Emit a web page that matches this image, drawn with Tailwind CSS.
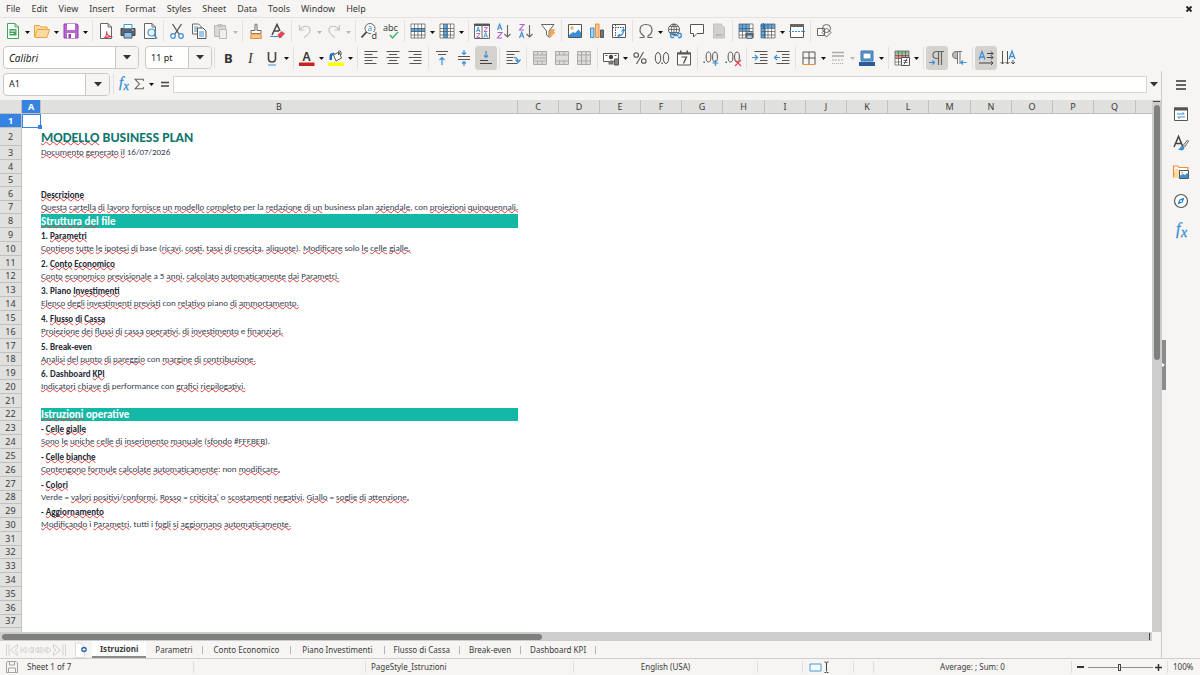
<!DOCTYPE html>
<html lang="it">
<head>
    <meta charset="UTF-8">
    <meta name="viewport" content="width=device-width, initial-scale=1.0">
    <title>Modello Business Plan</title>
    <script src="https://cdn.jsdelivr.net/npm/@tailwindcss/browser@4"></script>
</head>
<body class="h-screen flex flex-col overflow-hidden bg-[#f6f5f4] text-[#3a3a3a] text-[9px] leading-[12px] font-['Noto_Sans','Open_Sans',sans-serif]">

    <!-- Menu bar -->
    <header class="h-[17px] shrink-0 flex items-center justify-between pl-[6px] pr-[7px]">
        <nav id="menu" class="flex gap-[11px]"></nav>
        <button aria-label="Close document" class="size-[8px]">
            <svg viewBox="0 0 8 8" class="size-[8px]" fill="none" stroke="#222" stroke-width="1.8"><path d="M1.5 1.5l5 5M6.5 1.5l-5 5"/></svg>
        </button>
    </header>

    <!-- Standard toolbar -->
    <div id="standard" class="h-[27px] shrink-0 flex items-center border-t border-[#e4e3e1] pl-[2px] mr-[16px]"></div>

    <!-- Formatting toolbar -->
    <div class="h-[27px] shrink-0 flex items-center pl-[3px]">
        <div class="grid w-[136px] h-[23px] mr-[6px] rounded-[4px] border border-[#cdc7c2] bg-white overflow-hidden">
            <select aria-label="Font name" class="col-start-1 row-start-1 appearance-none pl-[5px] italic text-[10px] text-[#222]"><option>Calibri</option></select>
            <span class="col-start-1 row-start-1 justify-self-end pointer-events-none w-[23px] bg-[#f6f5f4] border-l border-[#cdc7c2] flex items-center justify-center"><svg viewBox="0 0 8 5" class="w-[8px] h-[5px]"><path d="M0 0h8L4 4.5z" fill="#2e3436"/></svg></span>
        </div>
        <div class="grid w-[67px] h-[23px] rounded-[4px] border border-[#cdc7c2] bg-white overflow-hidden">
            <select aria-label="Font size" class="col-start-1 row-start-1 appearance-none pl-[5px] text-[9px] text-[#222]"><option>11 pt</option></select>
            <span class="col-start-1 row-start-1 justify-self-end pointer-events-none w-[23px] bg-[#f6f5f4] border-l border-[#cdc7c2] flex items-center justify-center"><svg viewBox="0 0 8 5" class="w-[8px] h-[5px]"><path d="M0 0h8L4 4.5z" fill="#2e3436"/></svg></span>
        </div>
        <div id="formatting" class="flex items-center"></div>
    </div>

    <div class="flex-1 min-h-0 flex">
        <main class="flex-1 min-w-0 flex flex-col">
            <!-- Formula bar -->
            <div class="h-[29px] shrink-0 flex items-center pb-[3px] pl-[3px]">
                <div class="grid w-[107px] h-[23px] rounded-[4px] border border-[#cdc7c2] bg-white overflow-hidden">
                    <input aria-label="Name box" value="A1" class="col-start-1 row-start-1 w-full pl-[5px] text-[#222]">
                    <button aria-label="Named ranges" class="col-start-1 row-start-1 justify-self-end w-[24px] bg-[#f6f5f4] border-l border-[#cdc7c2] flex items-center justify-center"><svg viewBox="0 0 8 5" class="w-[8px] h-[5px]"><path d="M0 0h8L4 4.5z" fill="#2e3436"/></svg></button>
                </div>
                <div id="formula" class="flex items-center pl-[3px]"></div>
                <input aria-label="Formula" class="flex-1 h-[17px] bg-white border border-[#d5d3d0]">
                <button aria-label="Expand formula bar" class="w-[14px] flex justify-center"><svg viewBox="0 0 8 5" class="w-[8px] h-[5px]"><path d="M0 0h8L4 4.5z" fill="#2e3436"/></svg></button>
            </div>

            <!-- Cell grid -->
            <div class="flex-1 min-h-0 flex">
                <div class="flex-1 min-w-0 overflow-hidden bg-white">
                    <table class="w-full table-fixed border-separate border-spacing-0">
                        <colgroup id="cols"></colgroup>
                        <thead><tr id="letters" class="h-[14px] bg-[#e0e0de]"></tr></thead>
                        <tbody id="cells"></tbody>
                    </table>
                </div>
                <div class="w-[9px] shrink-0 bg-[#cdcdcd] flex flex-col items-center">
                    <div class="w-[7px] h-px mt-[1px] bg-[#444]"></div>
                    <div class="w-[6px] h-[48%] mt-[3px] rounded-full bg-[#7f817f]"></div>
                </div>
            </div>
            <div class="h-[9px] shrink-0 flex mr-[9px] bg-[#cdcdcd] items-center justify-between px-[2px]">
                <div class="w-[47%] h-[6px] rounded-full bg-[#7f817f]"></div>
                <div class="w-px h-[7px] bg-[#444]"></div>
            </div>

            <!-- Sheet tabs -->
            <div class="h-[17px] shrink-0 flex text-[8px]">
                <div class="w-[68px] flex items-center pl-[5px]">
                    <svg viewBox="0 0 62 14" class="w-[62px] h-[14px]" fill="none" stroke="#d3d2d0" stroke-width="1">
                        <path d="M1.500 1v12M4 1.500v11M12.500 1.500l-7 5.500 7 5.500v-3.500l-2.500-2 2.500-2z"/>
                        <path d="M16 4v6M21 4l-4 3 4 3zM27 4l-4 3 4 3zM28.500 4v6M33 4l-3 3 3 3z"/>
                        <path d="M34 4v6M36 4l4 3-4 3zM41 4v6M42 4l4 3-4 3z"/>
                        <path d="M48.500 1.500l7 5.500-7 5.500v-3.500l2.500-2-2.500-2zM58 1.500v11M60.500 1v12"/>
                    </svg>
                </div>
                <button aria-label="Add sheet" class="w-[24px] flex items-center justify-center">
                    <svg viewBox="0 0 14 16" class="w-[14px] h-[16px]"><path d="M2.500 1v14.500h9V5l-4-4z" fill="#fff" stroke="#dcdbd9"/><circle cx="11" cy="7.500" r="2.800" fill="#3465a4"/><path d="M11 6v3M9.500 7.500h3" stroke="#fff"/></svg>
                </button>
                <div id="tabs" class="flex" role="tablist"></div>
            </div>
        </main>

        <!-- Sidebar -->
        <div class="w-[4px] shrink-0 flex items-center border-l border-[#cbcac8]">
            <button aria-label="Hide sidebar" class="w-[4px] h-[50px] bg-[#8b8b8b] flex items-center"><svg viewBox="0 0 4 6" class="w-[4px] h-[6px]"><path d="M0 1l3 2-3 2z" fill="#fff"/></svg></button>
        </div>
        <aside id="sidebar" class="w-[35px] shrink-0 flex flex-col items-center pt-[3px] pr-[3px] gap-[7px]"></aside>
    </div>

    <!-- Status bar -->
    <footer class="h-[17px] shrink-0 flex items-center border-t border-[#cfcecc] text-[8px]">
        <div class="w-[23px] flex justify-center">
            <svg viewBox="0 0 12 12" class="size-[12px]" fill="none" stroke="#a3a3a1"><path d="M1 .500h9l1.500 1.500v9.500H.500V1zM3.500.500v3.500h5V.500M2.500 11V7h7v4"/></svg>
        </div>
        <div class="w-[171px] pl-[4px] border-r border-[#e0dfdd]">Sheet 1 of 7</div>
        <div class="w-[172px] h-[12px] border-r border-[#e0dfdd]"></div>
        <div class="w-[208px] pl-[5px] border-r border-[#e0dfdd]">PageStyle_Istruzioni</div>
        <div class="flex-1 text-center border-r border-[#e0dfdd]">English (USA)</div>
        <div class="w-[45px] h-[12px] border-r border-[#e0dfdd]"></div>
        <div class="w-[51px] h-[12px] border-r border-[#e0dfdd] flex items-center pl-[6px]">
            <svg viewBox="0 0 20 12" class="w-[20px] h-[12px]" fill="none"><path d="M1 3h11v7H1z" fill="#f3f9fd" stroke="#4a9bd6" stroke-width="1"/><path d="M15.500 1h1.500l.5.500.5-.500h1.500M17.500 1.500v9M15.500 11.500h1.500l.5-.500.5.500h1.500" stroke="#444"/></svg>
        </div>
        <div class="w-[20px] h-[12px] border-r border-[#e0dfdd]"></div>
        <div class="w-[198px] text-center border-r border-[#e0dfdd]">Average: ; Sum: 0</div>
        <div class="w-[96px] h-[12px] border-r border-[#e0dfdd] flex items-center justify-between px-[5px]">
            <button aria-label="Zoom out" class="w-[8px] h-[12px] flex items-center"><span class="w-[7px] h-[2px] bg-[#2e3436]"></span></button>
            <input type="range" aria-label="Zoom" min="0" max="100" value="49" class="appearance-none w-[65px] h-px bg-[#8e8e8c] [&::-webkit-slider-thumb]:appearance-none [&::-webkit-slider-thumb]:w-[3px] [&::-webkit-slider-thumb]:h-[7px] [&::-webkit-slider-thumb]:bg-[#f6f5f4] [&::-webkit-slider-thumb]:border [&::-webkit-slider-thumb]:border-[#444]">
            <button aria-label="Zoom in" class="size-[7px]"><svg viewBox="0 0 7 7" class="size-[7px]"><path d="M3.500 0v7M0 3.500h7" stroke="#2e3436" stroke-width="1.500"/></svg></button>
        </div>
        <div class="w-[32px] pl-[5px]">100%</div>
    </footer>

    <script>
        // Icons on a 16x16 grid
        const doc = '<path d="M2.500.500h7.500l3.500 3.500v11.500h-11z" fill="#fff" stroke="#666"/><path d="M10 .500v3.500h3.500" fill="none" stroke="#666"/>';
        const cellGrid = '<path d="M1 1h14v14H1z" fill="#fff"/>';
        const gridLines = '<path d="M1 1h14v14H1zM1 5.500h14M1 8.500h14M1 12h14M4.500 1v14M8 1v14M11.500 1v14" fill="none" stroke="#555" stroke-width=".7"/>';
        const calendar = '<path d="M1.500 3h13v12h-13z" fill="#fafafa" stroke="#555"/><path d="M1 2.500h14v2H1zM4 .500h1.500v3H4zM10.500.500h1.500v3h-1.500z" fill="#555"/>';
        const mergeBase = '<path d="M1.500 1.500h13v13h-13z" fill="#dcdcda" stroke="#aaa9a7"/>';
        const txt = (x, y, size, fill, s) => `<text x="${x}" y="${y}" font-size="${size}" fill="${fill}">${s}</text>`;
        const icons = {
            'New': '<path d="M2.500.500h7.500l3.500 3.500v11.500h-11z" fill="#fff" stroke="#43a35c"/><path d="M10 .500v3.500h3.500" fill="none" stroke="#43a35c"/><path d="M4.500 6h7v6.500h-7z" fill="#43a35c"/><path d="M5.500 8h5M5.500 10.500h3" stroke="#fff"/>',
            'Open': '<path d="M.500 14V2.500h5l1.500 1.500h6v3M.500 14L3.500 6.500h12l-2.500 8H1z" fill="#fddba0" stroke="#e8a33d" stroke-linejoin="round"/>',
            'Save': '<path d="M1 1h13l1 1v13H1z" fill="#b868cf" stroke="#9440ab"/><path d="M4 1h8v6H4z" fill="#fff"/><path d="M4 10h8v5H4z" fill="#fff"/><path d="M5.500 11h2.500v4H5.500z" fill="#9440ab"/>',
            'Export as PDF': doc + '<path d="M6 15.500c2-2 3-5 2.500-7 0 3 2.500 5.500 6 5.500-3-1-6 0-8.500 1.500z" fill="none" stroke="#dc3b4a" stroke-width="1.100"/>',
            'Print': '<path d="M1 5.500h14v7H1z" fill="#5c6467" stroke="#444"/><path d="M4 1.500h8v4H4z" fill="#fff" stroke="#4a93cf"/><path d="M4 9.500h8v5.500H4z" fill="#8bc3ee" stroke="#4a5560"/><path d="M12 7h1.500" stroke="#fff"/>',
            'Print preview': doc + '<circle cx="9.500" cy="9.500" r="3.500" fill="#e6f3fd" stroke="#4a93cf" stroke-width="1.200"/><path d="M12 12l3 3.500" stroke="#4a93cf" stroke-width="1.500"/>',
            'Cut': '<path d="M3.500 1l6.500 10M12.500 1L6 11" fill="none" stroke="#555" stroke-width="1.300"/><circle cx="4" cy="13" r="2.300" fill="none" stroke="#3b8fd4" stroke-width="1.200"/><circle cx="12" cy="13" r="2.300" fill="none" stroke="#3b8fd4" stroke-width="1.200"/>',
            'Copy': '<path d="M1.500 1h6l2.500 2.500V11h-8.500z" fill="#fff" stroke="#666"/><path d="M3 4h4M3 6h5M3 8h4" stroke="#4a93cf"/><path d="M6.500 5h5.500l3 3v7.500H6.500z" fill="#fff" stroke="#555"/><path d="M8 9h5M8 11h5M8 13h5" stroke="#3b8fd4"/>',
            'Paste': '<path d="M1.500 2.500h11v11h-11z" fill="#d9d8d6" stroke="#b9b8b6"/><path d="M4.500 1h5v3h-5z" fill="#c3c2c0"/><path d="M6.500 6.500h7v9h-7z" fill="#f0efee" stroke="#b9b8b6"/>',
            'Clone formatting': '<path d="M7 1.500q1-1 2 0v6h4v3H3v-3h4z" fill="#fff" stroke="#666"/><path d="M3 11h10l.500 4.500h-11z" fill="#fbc78c" stroke="#e8913a"/>',
            'Clear formatting': '<path d="M2 12L7 1.500 10 8M4 8h5" fill="none" stroke="#444" stroke-width="1.500"/><path d="M0 13.500h8" stroke="#3b8fd4"/><path d="M7.500 12l4-4 3.500 2.500-4 4.500h-2z" fill="#e04a58"/>',
            'Undo': '<path d="M2.500 2v5h5M3 6.500C6 2 12 2.500 13 6c1 3.500-2 6-6 8.500" fill="none" stroke="#c4c3c1" stroke-width="1.200"/>',
            'Redo': '<path d="M13.500 2v5h-5M13 6.500C10 2 4 2.500 3 6c-1 3.500 2 6 6 8.500" fill="none" stroke="#c4c3c1" stroke-width="1.200"/>',
            'Find and replace': '<circle cx="9" cy="5.500" r="5" fill="#fff" stroke="#666"/><path d="M5.500 9L.500 14.500" stroke="#444" stroke-width="1.800"/>' + txt(6.500, 8, 8, '#3b8fd4', 'a') + '<path d="M10 9h6v7h-6z" fill="#f6f5f4"/>' + txt(10.500, 15.500, 9, '#444', 'd'),
            'Spelling': txt(0, 8, 9, '#444', 'abc') + '<path d="M7 12l2.500 3 5.500-6" fill="none" stroke="#3fae6a" stroke-width="1.400"/>',
            'Row': cellGrid + '<path d="M1 5h14v4H1z" fill="#5aaae8"/>' + gridLines,
            'Column': cellGrid + '<path d="M4.500 1H9v14H4.500z" fill="#5aaae8"/>' + gridLines,
            'Sort': '<path d="M.500 1h15v14.500H.500z" fill="#fff" stroke="#666"/><path d="M0 1h16v2H0z" fill="#555"/><path d="M8 2v14" stroke="#666"/><path d="M2.500 9l1.700-5 1.700 5M3 7.500h2.500M9.800 14.500l1.900-5 1.900 5M10.500 13h2.500" fill="none" stroke="#3b8fd4" stroke-width=".9"/><path d="M2.500 10.500h3.500l-3.500 4h3.500M10 4.500h3.500L10 8.500h3.500" fill="none" stroke="#b05fc8" stroke-width=".9"/>',
            'Sort ascending': '<path d="M1.500 7l2.200-6 2.200 6M2.200 5h3" fill="none" stroke="#3b8fd4" stroke-width="1.100"/><path d="M1.500 9.500h4.500l-4.500 5.500h4.500" fill="none" stroke="#b05fc8" stroke-width="1.100"/><path d="M11.500 2v12M8.500 11l3 3 3-3" fill="none" stroke="#666" stroke-width="1.100"/>',
            'Sort descending': '<path d="M1.500 1.500h4.500l-4.500 5.500h4.500" fill="none" stroke="#b05fc8" stroke-width="1.100"/><path d="M1.500 15l2.200-6 2.200 6M2.200 13h3" fill="none" stroke="#3b8fd4" stroke-width="1.100"/><path d="M11.500 2v12M8.500 11l3 3 3-3" fill="none" stroke="#666" stroke-width="1.100"/>',
            'AutoFilter': '<path d="M1.500 1.500h12.500L9 8v6l-2.500-2V8z" fill="#fff" stroke="#666" stroke-linejoin="round"/><path d="M11 6.500h3.500l-1.500 3h2L9.500 15l1-4H9z" fill="#f6a95a" stroke="#e8913a" stroke-width=".6"/>',
            'Image': '<path d="M1.500 1.500h13v13h-13z" fill="#fff" stroke="#555"/><circle cx="5" cy="5" r="1.700" fill="#f6b25a"/><path d="M2 14V12l4-3 2 1 3.500-3.500L14 9.500V14z" fill="#3b8fd4"/>',
            'Chart': '<path d="M1.500 5h3.500v9.500H1.500z" fill="#a8d2f3" stroke="#3b8fd4"/><path d="M6.500 1h3.500v13.500H6.500z" fill="#fbc78c" stroke="#e8913a"/><path d="M11.500 7h3v7.500h-3z" fill="#777" stroke="#555"/>',
            'Pivot table': '<path d="M1.500 1.500h13v13h-13z" fill="#fff" stroke="#555"/><path d="M1.500 4.500h13M4.500 1.500v13" stroke="#555" stroke-dasharray="1.500 1"/><path d="M7 13c4 0 5.500-2 5.500-6M10.500 8.500l2-2.500 2 2.500M9 11l-2 2 2 2" fill="none" stroke="#3b8fd4" stroke-width="1.200"/>',
            'Special character': '<path d="M1.500 14.500h4.500v-1.500C3.500 11.500 2 9.500 2 7c0-3.500 2.500-5.500 6-5.500S14 3.500 14 7c0 2.500-1.500 4.500-4 6v1.500h4.500" fill="none" stroke="#666" stroke-width="1.200"/>',
            'Hyperlink': '<circle cx="7" cy="6.500" r="5.500" fill="#fff" stroke="#555"/><path d="M1.500 6.500h11M7 1v11M2.500 3.500h9M2.500 9.500h9M7 1C3.500 4 3.500 9 7 12M7 1c3.500 3 3.500 8 0 11" fill="none" stroke="#555" stroke-width=".8"/><path d="M7 10.500H4.500q-2 2 0 4H7M11 10.500h2.500q2 2 0 4H11M6.500 12.500h5" fill="none" stroke="#3b8fd4" stroke-width="1.300"/>',
            'Comment': '<path d="M1.500 1.500h13v9H8L4.500 14v-3.500h-3z" fill="#fff" stroke="#555"/>',
            'Headers and footers': '<path d="M2.500 1h7.500l3.500 3.500v10.500h-11z" fill="#d2d1cf" stroke="#c3c2c0"/><path d="M4.500 11h7v2h-7z" fill="#b9b8b6"/>',
            'Print range': cellGrid + '<path d="M1 1h10v7H1z" fill="#5aaae8"/>' + gridLines + '<path d="M7.500 10h8v4.500h-8z" fill="#5c6467"/><path d="M9 8.500h5v2H9zM9 12h5v3.500H9z" fill="#a8d2f3" stroke="#555" stroke-width=".7"/>',
            'Freeze': cellGrid + '<path d="M1 1h14v4H1zM1 1h5v14H1z" fill="#5aaae8"/>' + gridLines + '<path d="M3.500 0v6M.500 3h6" stroke="#1d70b8"/>',
            'Split': '<path d="M1.500 1.500h13v13h-13z" fill="#fff" stroke="#555"/><path d="M1 1h14v3H1z" fill="#666"/><path d="M0 8.500h16" stroke="#3b8fd4" stroke-dasharray="2 1"/>',
            'Draw functions': '<path d="M1.500 5.500h7v7h-7z" fill="#fff" stroke="#666"/><circle cx="10.500" cy="5.500" r="4" fill="none" stroke="#666"/><path d="M10.500 5l4.500 4.500-4.500 4.500L6 9.500z" fill="none" stroke="#666"/>',
            'Bold': '<text x="4" y="13" font-size="13" font-weight="700" fill="#333">B</text>',
            'Italic': '<text x="6" y="13" font-size="14" font-style="italic" font-family="Liberation Serif" fill="#333">I</text>',
            'Underline': '<path d="M4.500 2v6.500q0 3.500 3.500 3.500t3.500-3.500V2" fill="none" stroke="#444" stroke-width="1.600"/><path d="M4 15h8" stroke="#3b8fd4"/>',
            'Font color': '<text x="3.500" y="11" font-size="12" font-weight="600" fill="#333">A</text><path d="M0 12.500h15.500v3.500H0z" fill="#c9211e"/>',
            'Background color': '<path d="M5.500 5l5.500-3 2.500 6-5.500 3z" fill="#fff" stroke="#555"/><path d="M10.500 5V1.500q1.500-2 2.500.500v3" fill="none" stroke="#555"/><path d="M1.500 10V5.500Q2.500 2 7 3L4 6v4z" fill="#1d70b8"/><path d="M0 12.500h16v3.500H0z" fill="#ff0"/>',
            'Align left': '<path d="M1.500 1.500h13M1.500 4.500h8M1.500 7.500h13M1.500 10.500h8M1.500 13.500h12" stroke="#555"/>',
            'Align center': '<path d="M1.500 1.500h13M4 4.500h8M1.500 7.500h13M4 10.500h8M2.500 13.500h11" stroke="#555"/>',
            'Align right': '<path d="M1.500 1.500h13M6.500 4.500h8M1.500 7.500h13M6.500 10.500h8M2.500 13.500h12" stroke="#555"/>',
            'Align top': '<path d="M2 1.500h12M4 4.500h8" stroke="#555"/><path d="M8 15V8M5.500 10l2.500-2.500 2.500 2.500" fill="none" stroke="#3b8fd4" stroke-width="1.200"/>',
            'Center vertically': '<path d="M2 6.500h12M2 9.500h12" stroke="#555"/><path d="M8 0v4.500M6 2.500l2 2 2-2M8 16v-5M6 13.500l2-2 2 2" fill="none" stroke="#3b8fd4" stroke-width="1.200"/>',
            'Align bottom': '<path d="M2 13.500h12M2 10.500h8" stroke="#444"/><path d="M8 1v6M6 5.500l2 2 2-2" fill="none" stroke="#3b8fd4" stroke-width="1.200"/>',
            'Wrap text': '<path d="M1.500 1.500h13M1.500 4.500h8M1.500 7.500h7M1.500 10.500h6M1.500 13.500h11" stroke="#555"/><path d="M9 7.500q4 0 4 4M10.500 9.500l2.500 3 2.500-3" fill="none" stroke="#3b8fd4" stroke-width="1.200"/>',
            'Merge and center': mergeBase + '<path d="M1.500 5h13M1.500 11h13M5.500 1.500V5M10 1.500V5M5.500 11v3.500M10 11v3.500M1.500 8h13" stroke="#aaa9a7"/>',
            'Merge cells': mergeBase + '<path d="M1.500 5h13M1.500 11h13M5.500 1.500V5M10 1.500V5M5.500 11v3.500M10 11v3.500" stroke="#aaa9a7"/>',
            'Unmerge cells': mergeBase + '<path d="M1.500 5h13M1.500 11h13M5.500 1.500v13M10 1.500v13" stroke="#aaa9a7"/>',
            'Currency': '<path d="M.500 3.500h15v8H.500z" fill="#fff" stroke="#555"/><circle cx="8" cy="7" r="2.200" fill="#444"/><path d="M2.500 5.500h2M11.500 5.500h2" stroke="#555"/><path d="M5.500 12q2-3 5-1v3.500h-5z" fill="#777"/><path d="M11.500 9h4v6h-4z" fill="#888" stroke="#555"/>',
            'Percent': '<circle cx="4.200" cy="5" r="2.300" fill="none" stroke="#555" stroke-width="1.100"/><circle cx="11.800" cy="11" r="2.300" fill="none" stroke="#555" stroke-width="1.100"/><path d="M11.500 2l-7 12" stroke="#555" stroke-width="1.100"/>',
            'Number': '<ellipse cx="4" cy="8" rx="2.700" ry="5.500" fill="none" stroke="#555"/><ellipse cx="12" cy="8" rx="2.700" ry="5.500" fill="none" stroke="#555"/><path d="M7.500 12.500h1.200v1.500H7.500z" fill="#444"/>',
            'Date': calendar + '<path d="M5.500 7h5l-3 6.500" fill="none" stroke="#444" stroke-width="1.200"/>',
            'Add decimal place': '<ellipse cx="5.500" cy="7" rx="2.400" ry="5" fill="none" stroke="#555"/><ellipse cx="12" cy="7" rx="2.400" ry="5" fill="none" stroke="#555"/><path d="M.500 11.500h1.300v1.500H.500z" fill="#444"/><path d="M12.500 10v6M9.500 13h6" stroke="#3b8fd4" stroke-width="1.200"/>',
            'Delete decimal place': '<ellipse cx="5.500" cy="7" rx="2.400" ry="5" fill="none" stroke="#555"/><ellipse cx="12" cy="7" rx="2.400" ry="5" fill="none" stroke="#555"/><path d="M.500 11.500h1.300v1.500H.500z" fill="#444"/><path d="M10 10l6 6M16 10l-6 6" stroke="#e04a58" stroke-width="1.200"/>',
            'Increase indent': '<path d="M2.500 1.500h13M8 4.500h7.500M8 7.500h7.500M8 10.500h7.500M2.500 13.500h13" stroke="#555"/><path d="M0 7.500h5.500M3 5l2.500 2.500L3 10" fill="none" stroke="#3b8fd4" stroke-width="1.200"/>',
            'Decrease indent': '<path d="M2.500 1.500h13M8 4.500h7.500M8 7.500h7.500M8 10.500h7.500M2.500 13.500h13" stroke="#555"/><path d="M6 7.500H.500M3 5L.500 7.500 3 10" fill="none" stroke="#3b8fd4" stroke-width="1.200"/>',
            'Borders': '<path d="M2 14V2h12v12M2 8h12M8 2v12" fill="none" stroke="#555"/><path d="M1.500 14.500h13" stroke="#e8913a"/>',
            'Border style': '<path d="M2 2.500h12M2 6h12" stroke="#aaa9a7" stroke-width="1.500"/><path d="M2 10h12" stroke="#aaa9a7" stroke-dasharray="2 1"/><path d="M2 13.500h12" stroke="#aaa9a7" stroke-dasharray="1 1"/>',
            'Border color': '<path d="M2 1h12v10H2z" fill="#5aaae8" stroke="#3b6ea5"/><path d="M4 3h8v6H4z" fill="#fff" stroke="#3b6ea5"/><path d="M0 12h16v4H0z" fill="#2a5c9a"/>',
            'Conditional formatting': cellGrid + '<path d="M1 1h14v3.500H1z" fill="#7fca95"/><path d="M1 4.500h14v4H1z" fill="#ee8a84"/>' + gridLines + '<path d="M7.500 7.500h8v8h-8z" fill="#fff" stroke="#555"/><path d="M9.500 10.500h4M9.500 12.500h4M13 8.500l-3 6" stroke="#555" stroke-width=".9"/>',
            'Left-to-right': '<path d="M9.500 15V1.500M12.500 1.500V15M15 1.500H7.500Q4 1.500 4 5t3.500 3.500h2" fill="none" stroke="#666" stroke-width="1.200"/><path d="M0 12.500h5.500M3.500 10.500l2 2-2 2" fill="none" stroke="#3b8fd4" stroke-width="1.200"/>',
            'Right-to-left': '<path d="M6.500 1.500v12.500M9 14V1.500" fill="none" stroke="#777"/><path d="M11 1.500H5Q1.500 1.500 1.500 5T5 8.500h1.500v-7" fill="#bbb" stroke="#777"/><path d="M15.500 12.500H10M12 10.500l-2 2 2 2" fill="none" stroke="#3b8fd4" stroke-width="1.200"/>',
            'Horizontal text': '<path d="M1 9.500l3-8 3 8M2 7h4" fill="none" stroke="#3b8fd4" stroke-width="1.300"/><path d="M9 3.500h6M13 1.500l2 2-2 2M9 7.500h6M13 5.500l2 2-2 2M1 13h14M13 11l2 2-2 2" fill="none" stroke="#444"/>',
            'Vertical text': '<path d="M9 9l3-8 3 8M10 6.500h4" fill="none" stroke="#3b8fd4" stroke-width="1.300"/><path d="M2.500 1v13M.500 12l2 2 2-2M7.500 1v13M5.500 12l2 2 2-2M13 10v4M11 12l2 2 2-2" fill="none" stroke="#555"/>',
            'Function wizard': '<text x="4" y="11" font-size="15" font-style="italic" font-family="Liberation Serif" fill="#3b8fd4" stroke="#3b8fd4" stroke-width=".3">f</text><text x="8.500" y="14" font-size="12" font-style="italic" font-family="Liberation Serif" fill="#3b8fd4" stroke="#3b8fd4" stroke-width=".3">x</text>',
            'Select function': '<path d="M13 4.500V2.500H3.500L8.500 8l-5 5.500H13v-2" fill="none" stroke="#666" stroke-width="1.200"/>',
            'Accept formula': '<path d="M4 6.500h8M4 10h8" stroke="#444" stroke-width="1.500"/>',
            'Sidebar settings': '<path d="M3 4h10M3 8h10M3 12h10" stroke="#333" stroke-width="1.500"/>',
            'Properties': '<path d="M1.500 2h13v12.500h-13z" fill="#fff" stroke="#555"/><path d="M1 1.500h14v3H1z" fill="#555"/><path d="M4 8h7M9.500 6.500L11.500 8M12 11H5M6.500 12.500L4.500 11" stroke="#3b8fd4"/>',
            'Styles': '<path d="M1 12L5.500 1.500 10 12M2.500 8.500h6" fill="none" stroke="#444" stroke-width="1.500"/><path d="M14.500 5l-4 5 1.500 1.500L15.500 6z" fill="#fff" stroke="#666"/><path d="M5 14.500q2-1 3-3l3.500.500q0 3-3 3.500z" fill="#3b8fd4"/>',
            'Gallery': '<path d="M.500 13.500V2h4.500l1 1.500h9v3M.500 13.500L3 6" fill="#fff" stroke="#e8913a" stroke-width="1.200"/><path d="M2 5h5v9H1z" fill="#fddba0"/><path d="M6.500 6.500h9v8h-9z" fill="#fff" stroke="#555"/><path d="M7 14v-2.500l3-1.500 2 1 2-2 1 1V14z" fill="#3b8fd4"/><circle cx="9" cy="8.500" r="1" fill="#f6b25a"/>',
            'Navigator': '<circle cx="8" cy="8" r="6.500" fill="#fff" stroke="#555" stroke-width="1.200"/><path d="M11.500 4.500L9.500 9.500l-5 2 2-5z" fill="#1d80d0"/><circle cx="8" cy="8" r="1" fill="#fff"/>',
            'Functions': '<text x="3" y="11.500" font-size="16" font-style="italic" font-family="Liberation Serif" fill="#3b8fd4" stroke="#3b8fd4" stroke-width=".3">f</text><text x="8" y="15" font-size="14" font-style="italic" font-family="Liberation Serif" fill="#3b8fd4" stroke="#3b8fd4" stroke-width=".3">x</text>'
        };

        const svg = name => `<svg viewBox="0 0 16 16" class="size-[16px] overflow-visible">${icons[name]}</svg>`;

        // 'v' = drop-down arrow, 'd' = disabled arrow, '|' = separator, '*' prefix = pressed
        function toolbar(id, items) {
            document.getElementById(id).innerHTML = items.map((item, i) => {
                if (item === '|') {
                    const afterArrow = items[i - 1] === 'v' || items[i - 1] === 'd';
                    return `<span class="${afterArrow ? 'w-[6px]' : 'w-[5px]'} h-[22px] flex justify-center"><span class="w-px bg-[#e2e1df]"></span></span>`;
                }
                if (item === 'v' || item === 'd') {
                    return `<button aria-label="More" class="w-[7px] h-[22px] flex items-center justify-center"><svg viewBox="0 0 5 3" class="w-[5px] h-[3px] mt-[2px]"><path d="M0 0h5L2.500 3z" fill="${item === 'v' ? '#111' : '#b9b8b6'}"/></svg></button>`;
                }
                const pressed = item.startsWith('*');
                const name = pressed ? item.slice(1) : item;
                return `<button aria-label="${name}" class="w-[22px] h-[24px] flex items-center justify-center rounded-[3px] ${pressed ? 'bg-[#d5d2ce]' : ''}">${svg(name)}</button>`;
            }).join('');
        }

        toolbar('standard', ['New', 'v', 'Open', 'v', 'Save', 'v', '|', 'Export as PDF', 'Print', 'Print preview', '|',
            'Cut', 'Copy', 'Paste', 'd', '|', 'Clone formatting', 'Clear formatting', '|', 'Undo', 'd', 'Redo', 'd', '|',
            'Find and replace', 'Spelling', '|', 'Row', 'v', 'Column', 'v', '|', 'Sort', 'Sort ascending', 'Sort descending', 'AutoFilter', '|',
            'Image', 'Chart', 'Pivot table', '|', 'Special character', 'v', 'Hyperlink', 'Comment', 'Headers and footers', '|',
            'Print range', 'Freeze', 'v', 'Split', '|', 'Draw functions']);
        toolbar('formatting', ['|', 'Bold', 'Italic', 'Underline', 'v', '|', 'Font color', 'v', 'Background color', 'v', '|',
            'Align left', 'Align center', 'Align right', '|', 'Align top', 'Center vertically', '*Align bottom', '|', 'Wrap text', '|',
            'Merge and center', 'Merge cells', 'Unmerge cells', '|', 'Currency', 'v', 'Percent', 'Number', 'Date', '|',
            'Add decimal place', 'Delete decimal place', '|', 'Increase indent', 'Decrease indent', '|',
            'Borders', 'v', 'Border style', 'd', 'Border color', 'v', '|', 'Conditional formatting', 'v', '|',
            '*Left-to-right', 'Right-to-left', '|', '*Horizontal text', 'Vertical text']);

        document.getElementById('formula').innerHTML = `
            <span class="w-px h-[20px] bg-[#e2e1df]"></span>
            <button aria-label="Function wizard" class="w-[18px] flex justify-center">${svg('Function wizard')}</button>
            <button aria-label="Select function" class="w-[14px] flex justify-center"><svg viewBox="0 0 16 16" class="size-[14px]">${icons['Select function']}</svg></button>
            <button aria-label="More functions" class="w-[10px] flex justify-center"><svg viewBox="0 0 5 3" class="w-[5px] h-[3px]"><path d="M0 0h5L2.500 3z" fill="#111"/></svg></button>
            <button aria-label="Formula" class="w-[17px] flex justify-center">${svg('Accept formula')}</button>`;

        document.getElementById('sidebar').innerHTML =
            ['Sidebar settings', 'Properties', 'Styles', 'Gallery', 'Navigator', 'Functions']
                .map(name => `<button aria-label="${name}" class="size-[22px] flex items-center justify-center">${svg(name)}</button>`).join('');

        document.getElementById('menu').innerHTML =
            ['File', 'Edit', 'View', 'Insert', 'Format', 'Styles', 'Sheet', 'Data', 'Tools', 'Window', 'Help']
                .map(name => `<button>${name}</button>`).join('');

        const tabs = [['Parametri', 'px-[9px]'], ['Conto Economico', 'px-[11px]'], ['Piano Investimenti', 'px-[11px]'],
            ['Flusso di Cassa', 'px-[9px]'], ['Break-even', 'px-[9px]'], ['Dashboard KPI', 'px-[9px]']];
        document.getElementById('tabs').innerHTML =
            '<button role="tab" aria-selected="true" class="px-[8px] bg-white font-bold border-b-2 border-[#8b8b8b]">Istruzioni</button>' +
            tabs.map(([name, pad]) =>
                `<button role="tab" class="flex items-center"><span class="${pad}">${name}</span><span class="w-px h-[8px] bg-[#b5b4b2]"></span></button>`).join('');

        // Columns
        const letters = 'ABCDEFGHIJKLMNOPQ'.split('');
        const wide = ['H', 'M', 'Q'];
        document.getElementById('cols').innerHTML = '<col class="w-[22px]">' + letters.map(l =>
            l === 'A' ? '<col class="w-[19px]">' : l === 'B' ? '<col class="w-[477px]">'
                : wide.includes(l) ? '<col class="w-[42px]">' : '<col class="w-[41px]">').join('') + '<col>';
        document.getElementById('letters').innerHTML = '<td class="border-b border-r border-[#c0c0be]"></td>' + letters.map(l =>
            `<th scope="col" class="leading-[13px] p-0 border-b border-r border-[#c0c0be] ${l === 'A' ? 'bg-[#3584e4] text-white font-bold' : 'font-normal'}">${l}</th>`).join('') + '<td class="border-b border-[#c0c0be]"></td>';

        // Column B, words in [brackets] are flagged by the spell checker
        const rows = {
            2: ['title', '[MODELLO] BUSINESS PLAN'],
            3: ['text', '[Documento] [generato] [il] 16/07/2026'],
            6: ['bold', '[Descrizione]'],
            7: ['text', '[Questa] [cartella] [di] [lavoro] [fornisce] [un] [modello] [completo] per la [redazione] [di] [un] business plan [aziendale], con [proiezioni] [quinquennali.]'],
            8: ['band', '[Struttura] [del] file'],
            9: ['bold', '1. [Parametri]'],
            10: ['text', '[Contiene] [tutte] [le] [ipotesi] [di] base ([ricavi], [costi], [tassi] [di] [crescita], [aliquote]). [Modificare] solo [le] [celle] [gialle.]'],
            11: ['bold', '2. [Conto] [Economico]'],
            12: ['text', '[Conto] [economico] [previsionale] a 5 [anni], [calcolato] [automaticamente] [dai] [Parametri.]'],
            13: ['bold', '3. Piano [Investimenti]'],
            14: ['text', '[Elenco] [degli] [investimenti] [previsti] con [relativo] piano [di] [ammortamento.]'],
            15: ['bold', '4. [Flusso] [di] [Cassa]'],
            16: ['text', '[Proiezione] [dei] [flussi] [di] [cassa] [operativi], [di] [investimento] e [finanziari.]'],
            17: ['bold', '5. Break-even'],
            18: ['text', '[Analisi] [del] [punto] [di] [pareggio] con [margine] [di] [contribuzione.]'],
            19: ['bold', '6. Dashboard [KPI]'],
            20: ['text', '[Indicatori] [chiave] [di] performance con [grafici] [riepilogativi.]'],
            22: ['band', '[Istruzioni] operative'],
            23: ['bold', '- [Celle] [gialle]'],
            24: ['text', '[Sono] [le] [uniche] [celle] [di] [inserimento] [manuale] ([sfondo] #[FFFBEB]).'],
            25: ['bold', '- [Celle] [bianche]'],
            26: ['text', '[Contengono] [formule] [calcolate] [automaticamente]: non [modificare.]'],
            27: ['bold', '- [Colori]'],
            28: ['text', 'Verde = [valori] [positivi]/[conformi], [Rosso] = [criticita\'] o [scostamenti] [negativi], [Giallo] = [soglie] [di] [attenzione.]'],
            29: ['bold', '- [Aggiornamento]'],
            30: ['text', '[Modificando] i [Parametri], tutti i [fogli] [si] [aggiornano] [automaticamente.]']
        };
        const styles = {
            title: 'text-[14px] font-bold text-[#0f766e] pt-[2px]',
            text: 'text-[9px] text-[#374151] align-top',
            bold: 'text-[9px] font-bold text-[#1f2937] pt-[2px]',
            band: 'text-[11px] font-bold text-white bg-[#14b8a6] pt-px'
        };
        const short = [5, 7, 12, 18, 22, 28, 32, 37];
        const lastRow = 37;
        let html = '';
        for (let n = 1; n <= lastRow + 1; n++) {
            const height = n === 2 ? 'h-[18px]' : short.includes(n) ? 'h-[13px]' : 'h-[14px]';
            const [kind, value] = rows[n] || ['text', ''];
            const marked = value.replace(/\[([^\]]+)\]/g,
                '<span class="underline decoration-wavy decoration-1 decoration-[#dc3b38] underline-offset-[-1px] [text-decoration-skip-ink:none]">$1</span>');
            html += `
                <tr class="${height}">
                    <th scope="row" class="p-0 leading-[12px] border-b border-r border-[#c0c0be] ${n === 1 ? 'bg-[#3584e4] text-white font-bold' : 'bg-[#e0e0de] font-normal'}">${n <= lastRow ? n : ''}</th>
                    <td class="p-0 ${n === 1 ? 'relative border border-[#3584e4]' : ''}">${n === 1 ? '<span class="absolute -right-[2px] -bottom-[2px] size-[4px] bg-[#3584e4]"></span>' : ''}</td>
                    <td class="p-0 leading-[12px] whitespace-nowrap font-[Carlito,Lato,sans-serif] ${styles[kind]}">${marked}</td>
                    <td colspan="16" class="p-0"></td>
                </tr>`;
        }
        document.getElementById('cells').innerHTML = html;
    </script>
</body>
</html>
